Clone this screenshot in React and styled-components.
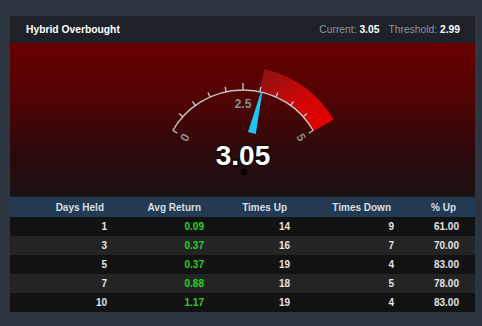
import React from 'react';
import styled, { createGlobalStyle } from 'styled-components';

const GlobalStyle = createGlobalStyle`
  html, body {
    margin: 0;
    padding: 0;
    background: #2c3540;
  }
  body {
    font-family: "Liberation Sans", Arial, sans-serif;
  }
`;

const Page = styled.div`
  width: 482px;
  height: 326px;
  padding: 16px 7px 0 10px;
  box-sizing: border-box;
`;

const Card = styled.div`
  width: 465px;
  background: #1f2329;
`;

const Header = styled.div`
  height: 27px;
  display: flex;
  align-items: center;
  justify-content: space-between;
  padding: 0 15px 0 16px;
  background: #1e2228;
  font-size: 10.3px;
  font-weight: bold;
  color: #fff;
`;

const Stats = styled.div`
  display: flex;
  gap: 9px;
  font-weight: normal;
  color: #8b95a1;

  b {
    color: #fff;
    font-weight: bold;
  }
`;

const GaugePanel = styled.div`
  height: 152px;
  display: flex;
  justify-content: center;
  background: linear-gradient(to bottom, #680000 0%, #520303 35%, #2a0a0c 75%, #1c1113 100%);
  border-bottom: 2px solid #1a1a1a;
`;

const Table = styled.div`
  font-size: 10px;
  font-weight: bold;
`;

const Row = styled.div`
  display: grid;
  grid-template-columns: 97px 97px 86px 104px 65px;
  height: ${(p) => (p.head ? 20 : 19)}px;
  align-items: center;
  background: ${(p) => (p.head ? '#243a52' : p.odd ? '#242424' : '#121212')};
  color: ${(p) => (p.head ? '#d8dee6' : '#e4e4e4')};
`;

const Cell = styled.div`
  text-align: right;
  padding-right: ${(p) => (p.head ? 3 : 0)}px;
  color: ${(p) => (p.green ? '#24d424' : 'inherit')};
`;

const CX = 100;
const CY = 128;
const R = 81;

const polar = (r, deg) => {
  const a = (deg * Math.PI) / 180;
  return [CX + r * Math.sin(a), CY - r * Math.cos(a)];
};

const valToDeg = (v) => (v / 5 - 0.5) * 120;

const Gauge = ({ value, threshold }) => {
  const t0 = valToDeg(threshold);
  const t1 = 60.5;
  const [a1x, a1y] = polar(R, t0);
  const [a2x, a2y] = polar(104, t0);
  const [b1x, b1y] = polar(R, t1);
  const [b2x, b2y] = polar(104, t1);
  const [s0x, s0y] = polar(R, -60);
  const [s1x, s1y] = polar(R, 60);

  const nd = valToDeg(value);
  const [tipx, tipy] = polar(R, nd - 0.4);
  const [tip2x, tip2y] = polar(R, nd + 0.6);
  const [bx, by] = polar(39, nd);
  const perp = ((nd + 90) * Math.PI) / 180;
  const hw = 4;
  const b1 = [bx - hw * Math.sin(perp), by + hw * Math.cos(perp)];
  const b2 = [bx + hw * Math.sin(perp), by - hw * Math.cos(perp)];

  const ticks = [];
  for (let i = 1; i < 10; i += 1) {
    const d = -60 + i * 12;
    const len = i === 5 ? 7 : 5;
    const [x1, y1] = polar(R, d);
    const [x2, y2] = polar(R + len, d);
    ticks.push(<line key={i} x1={x1} y1={y1} x2={x2} y2={y2} />);
  }
  const ends = [-60, 60].map((d) => {
    const [x1, y1] = polar(R, d);
    const [x2, y2] = polar(R - 5, d);
    return <line key={d} x1={x1} y1={y1} x2={x2} y2={y2} />;
  });

  const labels = [
    { t: '0', d: -60 },
    { t: '2.5', d: 0 },
    { t: '5', d: 60 },
  ].map(({ t, d }) => {
    const [x, y] = polar(67, d);
    return (
      <text
        key={t}
        x={x}
        y={y}
        transform={`rotate(${d} ${x} ${y})`}
        textAnchor="middle"
        dominantBaseline="central"
        fill="#8e8e8e"
        fontSize="12"
        fontWeight="bold"
        fontFamily="Liberation Sans, Arial, sans-serif"
      >
        {t}
      </text>
    );
  });

  return (
    <svg width="200" height="152" viewBox="0 0 200 152">
      <defs>
        <linearGradient id="band" x1="0" y1="0" x2="1" y2="1">
          <stop offset="0" stopColor="#861414" />
          <stop offset="0.5" stopColor="#cc0606" />
          <stop offset="1" stopColor="#ea0000" />
        </linearGradient>
      </defs>
      <path
        d={`M${a1x} ${a1y} L${a2x} ${a2y} A104 104 0 0 1 ${b2x} ${b2y} L${b1x} ${b1y} A${R} ${R} 0 0 0 ${a1x} ${a1y} Z`}
        fill="url(#band)"
      />
      <g stroke="#c4c4c4" strokeWidth="1.4" fill="none">
        <path d={`M${s0x} ${s0y} A${R} ${R} 0 0 1 ${s1x} ${s1y}`} />
        {ticks}
        {ends}
      </g>
      {labels}
      <polygon
        points={`${tipx},${tipy} ${tip2x},${tip2y} ${b2[0]},${b2[1]} ${b1[0]},${b1[1]}`}
        fill="#19c6f6"
      />
      <circle cx={CX + 1} cy={CY + 1} r="3.5" fill="#050505" />
      <text
        x={CX}
        y={122}
        textAnchor="middle"
        fill="#fff"
        stroke="#120606"
        strokeWidth="3"
        paintOrder="stroke"
        fontSize="28"
        fontWeight="bold"
        fontFamily="Liberation Sans, Arial, sans-serif"
      >
        {value.toFixed(2)}
      </text>
    </svg>
  );
};

const rows = [
  ['1', '0.09', '14', '9', '61.00'],
  ['3', '0.37', '16', '7', '70.00'],
  ['5', '0.37', '19', '4', '83.00'],
  ['7', '0.88', '18', '5', '78.00'],
  ['10', '1.17', '19', '4', '83.00'],
];

const heads = ['Days Held', 'Avg Return', 'Times Up', 'Times Down', '% Up'];

const App = () => (
  <Page>
    <GlobalStyle />
    <Card>
      <Header>
        <span>Hybrid Overbought</span>
        <Stats>
          <span>
            Current: <b>3.05</b>
          </span>
          <span>
            Threshold: <b>2.99</b>
          </span>
        </Stats>
      </Header>
      <GaugePanel>
        <Gauge value={3.05} threshold={2.99} />
      </GaugePanel>
      <Table>
        <Row head>
          {heads.map((h) => (
            <Cell head key={h}>
              {h}
            </Cell>
          ))}
        </Row>
        {rows.map((r, i) => (
          <Row key={r[0]} odd={i % 2 === 1}>
            {r.map((c, j) => (
              <Cell key={j} green={j === 1}>
                {c}
              </Cell>
            ))}
          </Row>
        ))}
      </Table>
    </Card>
  </Page>
);

export default App;
